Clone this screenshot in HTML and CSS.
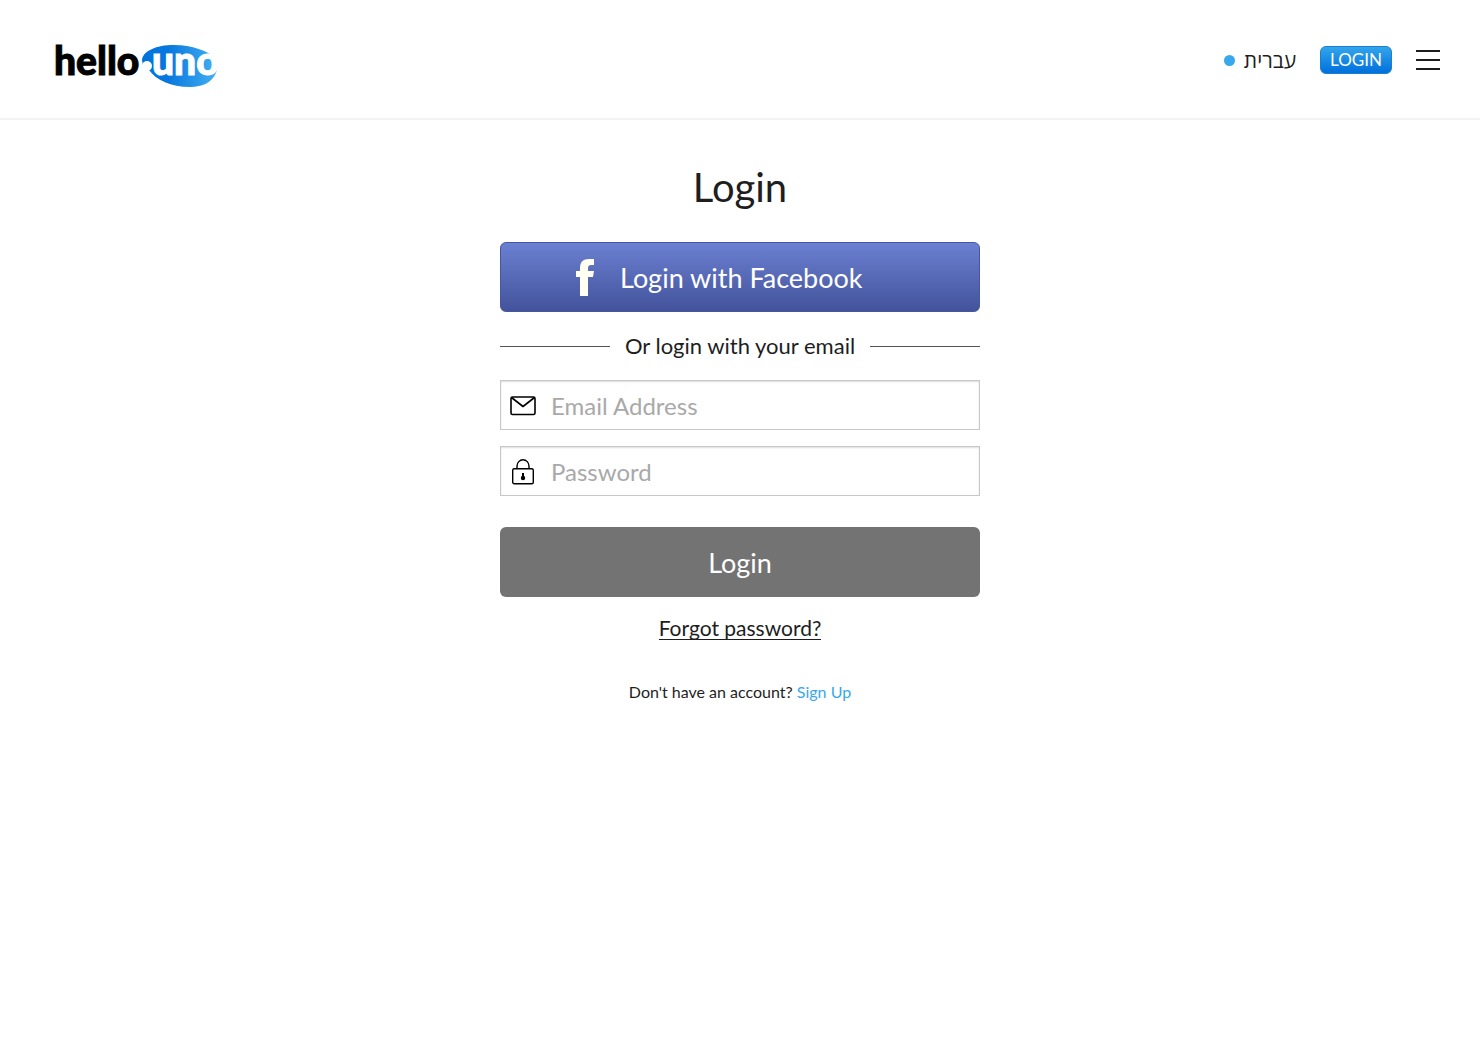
FILE: index.html
```html
<!DOCTYPE html>
<html lang="en">

<head>
  <meta charset="UTF-8" />
  <meta name="viewport" content="width=device-width, initial-scale=1" />
  <title>Login</title>
  <link rel="stylesheet" href="styles.css">
</head>

<body>
  <header class="header">
    <a class="logo" href="#" aria-label="hello uno">
      <svg width="180" height="44" viewBox="0 0 180 44">
        <defs>
          <linearGradient id="blob" x1="0" x2="1" y1="0" y2="0">
            <stop offset="0" stop-color="#0072dc" />
            <stop offset="0.35" stop-color="#0878df" />
            <stop offset="1" stop-color="#44b0f2" />
          </linearGradient>
        </defs>
        <path fill="url(#blob)" d="M87 15C88 6 101 0 119 0c18 0 34 6 41 13 3 5 3 10 1 15-4 9-13 14-26 14-19 0-34-7-41-17-3 0-5-2-6-4z" />
        <circle cx="92" cy="21" r="5" fill="#fff" />
        <text class="logo-hello" x="-1" y="30">hello</text>
        <text class="logo-uno" x="97" y="30">uno</text>
      </svg>
    </a>
    <nav class="nav">
      <a class="lang" href="#"><span class="dot"></span><span lang="he" dir="rtl">עברית</span></a>
      <a class="login-link" href="#">LOGIN</a>
      <button class="menu" type="button" aria-label="Menu">
        <svg width="24" height="20" viewBox="0 0 24 20" stroke="#1e1e1e" stroke-width="2">
          <path d="M0 1h24M0 10h24M0 19h24" />
        </svg>
      </button>
    </nav>
  </header>

  <main class="main">
    <h1>Login</h1>
    <button class="btn facebook" type="button">
      <svg class="fb-icon" width="18" height="37" viewBox="0 0 18 37" fill="#fffff2">
        <path d="M4 37V18H0v-6h4V9c0-6 3-9 9-9h5v6h-3c-2 0-3 1-3 3v3h6l-1 6h-5v19z" />
      </svg>
      <span>Login with Facebook</span>
    </button>
    <div class="or">Or login with your email</div>

    <form>
      <div class="field">
        <label for="email" aria-label="Email Address">
          <svg width="26" height="20" viewBox="0 0 26 20" fill="none" stroke="#000" stroke-width="1.6" stroke-linejoin="round">
            <rect x="1" y="1" width="24" height="17.5" rx="1.5" />
            <path d="M1.5 1.5L13 10.5 24.5 1.5" />
          </svg>
        </label>
        <input id="email" type="email" placeholder="Email Address" />
      </div>
      <div class="field">
        <label for="password" aria-label="Password">
          <svg width="22" height="26" viewBox="0 0 22 26" fill="none" stroke="#000" stroke-width="1.4">
            <rect x="0.7" y="9.7" width="20.6" height="15" rx="1.5" />
            <path d="M5 10V7a6 6.2 0 0 1 12 0v3" />
            <path d="M11 14v4" stroke-width="2" />
            <circle cx="11" cy="19" r="2.2" fill="#000" stroke="none" />
          </svg>
        </label>
        <input id="password" type="password" placeholder="Password" />
      </div>
      <button class="btn submit" type="submit">Login</button>
    </form>

    <a class="forgot" href="#">Forgot password?</a>
    <p class="signup">Don't have an account? <a href="#">Sign Up</a></p>
  </main>
</body>

</html>
```

FILE: styles.css
```css
* {
  box-sizing: border-box;
}

body {
  margin: 0;
  background-color: #fff;
  color: #1e1e1e;
  font-family: Lato, "Liberation Sans", sans-serif;
}

a {
  color: inherit;
  text-decoration: none;
}

button,
input {
  font-family: inherit;
}

/* header */
.header {
  display: flex;
  justify-content: space-between;
  align-items: center;
  height: 120px;
  padding: 2px 40px 0 55px;
  border-bottom: 2px solid #f3f3f3;
}

.logo {
  padding-top: 14px;
}

.logo svg,
.menu svg {
  display: block;
}

.logo svg {
  overflow: visible;
}

.logo text {
  font-family: Lato, sans-serif;
  font-weight: 900;
  font-size: 39px;
  stroke-width: 1px;
}

.logo-hello {
  fill: #000;
  stroke: #000;
}

.logo-uno {
  fill: #fff;
  stroke: #fff;
}

.nav {
  display: flex;
  align-items: center;
  gap: 24px;
}

.lang {
  display: flex;
  align-items: center;
  gap: 9px;
  font-family: "Open Sans", "DejaVu Sans", sans-serif;
  font-size: 21px;
  line-height: 28px;
}

.dot {
  width: 11px;
  height: 11px;
  border-radius: 50%;
  background-color: #37a7ee;
}

.login-link {
  height: 28px;
  padding: 0 9px;
  border: 1px solid #1c7fcb;
  border-radius: 6px;
  background: linear-gradient(#33a5ec, #0070dc);
  color: #fff;
  font-size: 17px;
  line-height: 26px;
}

.menu {
  padding: 0;
  border: none;
  background: none;
  cursor: pointer;
}

/* login box */
.main {
  max-width: 480px;
  margin: 0 auto;
  text-align: center;
}

h1 {
  margin: 40px 0 28px;
  font-size: 40px;
  font-weight: 400;
  line-height: 54px;
}

.btn {
  display: flex;
  align-items: center;
  width: 100%;
  height: 70px;
  border: none;
  border-radius: 6px;
  color: #fff;
  font-size: 27px;
  cursor: pointer;
}

.facebook {
  gap: 26px;
  padding: 0 75px;
  border: 1px solid #4557a3;
  background: linear-gradient(#6b80d2, #43539b);
}

.or {
  display: flex;
  align-items: center;
  gap: 15px;
  margin: 18px 0;
  font-size: 22px;
  line-height: 32px;
}

.or::before,
.or::after {
  content: "";
  flex: 1;
  height: 1px;
  background-color: #555;
}

.field {
  display: flex;
  align-items: center;
  height: 50px;
  margin-bottom: 16px;
  border: 1px solid #c8c8c8;
  box-shadow: inset 0 1px 2px #ddd;
}

.field label {
  display: flex;
  justify-content: center;
  width: 44px;
  padding-top: 2px;
}

.field input {
  flex: 1;
  min-width: 0;
  height: 100%;
  padding: 0 6px;
  border: none;
  outline: none;
  background: none;
  font-size: 24px;
}

.field input::placeholder {
  color: #a9a9a9;
}

.submit {
  justify-content: center;
  margin-top: 31px;
  background-color: #737373;
}

.forgot {
  display: inline-block;
  margin-top: 20px;
  border-bottom: 1px solid #1e1e1e;
  font-size: 21px;
  line-height: 22px;
}

.signup {
  margin: 40px 0;
  font-size: 16px;
  line-height: 24px;
}

.signup a {
  color: #37a7ee;
}
```
